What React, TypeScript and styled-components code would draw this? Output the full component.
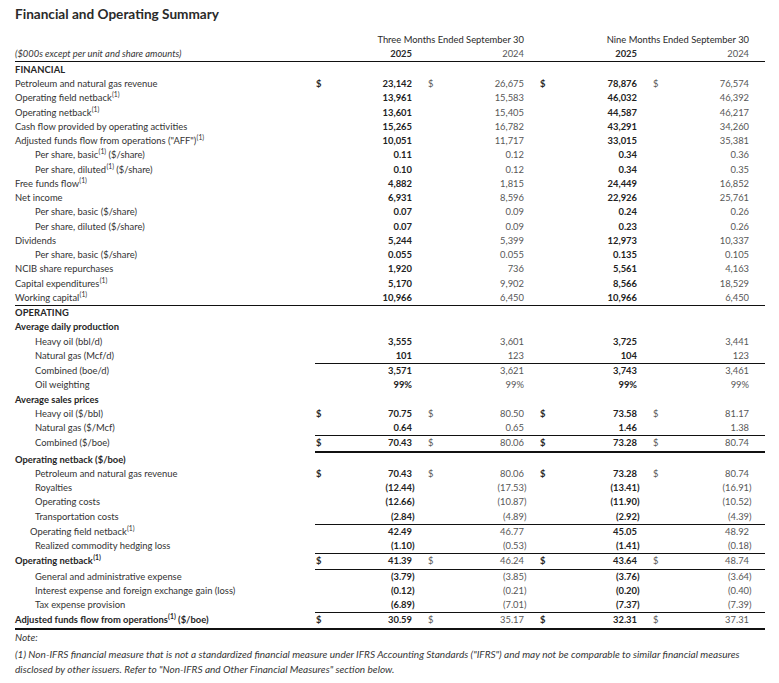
import React from "react";
import styled, { createGlobalStyle, css } from "styled-components";

const GlobalStyle = createGlobalStyle`
  html, body { margin: 0; padding: 0; background: #ffffff; }
  body { font-family: "Lato", "Liberation Sans", sans-serif; color: #333333; }
`;

const Page = styled.div`
  width: 750px;
  padding: 5px 14px 0 15px;
`;

const Title = styled.h1`
  margin: 0;
  font-size: 13.6px;
  line-height: 18px;
  font-weight: 700;
  color: #2a2a2a;
`;

const Table = styled.table`
  margin-top: 10px;
  width: 750px;
  table-layout: fixed;
  border-collapse: separate;
  border-spacing: 0;
  font-size: 9.4px;
`;

type Rule = "none" | "values" | "full" | "valuesThick" | "fullThick";

const ruleCss = (rule: Rule, isLabel: boolean) => {
  if (rule === "none") return "";
  if (isLabel && (rule === "values" || rule === "valuesThick")) return "";
  const w = rule === "valuesThick" || rule === "fullThick" ? 2 : 1;
  return css`border-bottom: ${w}px solid #111;`;
};

const cellBase = css<{ $tall?: boolean }>`
  vertical-align: top;
  line-height: ${(p) => (p.$tall ? "15px" : "14.25px")};
`;

const HeadCell = styled.th<{ $pr: number; $bold?: boolean; $muted?: boolean; $rule?: boolean }>`
  padding: 0 ${(p) => p.$pr}px 0 0;
  text-align: right;
  vertical-align: top;
  line-height: 14px;
  font-weight: ${(p) => (p.$bold ? 700 : 400)};
  color: ${(p) => (p.$muted ? "#575757" : "#2a2a2a")};
  white-space: nowrap;
  ${(p) => p.$rule && css`border-bottom: 1px solid #111;`}
`;

const UnitsCell = styled.th`
  padding: 0;
  text-align: left;
  vertical-align: top;
  line-height: 14px;
  font-weight: 400;
  font-style: italic;
  color: #363636;
  white-space: nowrap;
  border-bottom: 1px solid #111;
`;

const LabelCell = styled.td<{ $indent: number; $bold?: boolean; $caps?: boolean; $rule: Rule; $tall?: boolean }>`
  ${cellBase}
  padding: 0 0 0 ${(p) => p.$indent}px;
  text-align: left;
  white-space: nowrap;
  font-weight: ${(p) => (p.$bold ? 700 : 400)};
  color: ${(p) => (p.$bold ? "#262626" : "#333333")};
  ${(p) => p.$caps && css`text-transform: uppercase; letter-spacing: 0.1px;`}
  ${(p) => ruleCss(p.$rule, true)}
`;

const DollarCell = styled.td<{ $pl: number; $current?: boolean; $rule: Rule; $tall?: boolean }>`
  ${cellBase}
  padding: 0 0 0 ${(p) => p.$pl}px;
  text-align: left;
  font-weight: ${(p) => (p.$current ? 700 : 400)};
  color: ${(p) => (p.$current ? "#262626" : "#575757")};
  ${(p) => ruleCss(p.$rule, false)}
`;

const ValueCell = styled.td<{ $pr: number; $current?: boolean; $rule: Rule; $tall?: boolean }>`
  ${cellBase}
  padding: 0 ${(p) => p.$pr}px 0 0;
  text-align: right;
  white-space: nowrap;
  font-weight: ${(p) => (p.$current ? 700 : 400)};
  color: ${(p) => (p.$current ? "#222222" : "#575757")};
  ${(p) => ruleCss(p.$rule, false)}
`;

const Close = styled.span`
  display: inline-block;
  width: 0;
`;

const Sup = styled.sup`
  font-size: 6.8px;
  line-height: 0;
  vertical-align: 3.8px;
  margin-left: 0.3px;
`;

const Note = styled.p`
  margin: 0;
  font-size: 10px;
  line-height: 14px;
  font-style: italic;
  color: #363636;
`;

const Footnote = styled.p`
  margin: 3px 0 0;
  font-size: 10.05px;
  line-height: 15px;
  font-style: italic;
  color: #363636;
  white-space: nowrap;
`;

type Vals = [string, string, string, string];

type RowDef = {
  label: string;
  sup?: boolean;
  after?: string;
  indent?: number;
  bold?: boolean;
  caps?: boolean;
  vals?: Vals;
  dollar?: boolean;
  rule?: Rule;
  tall?: boolean;
};

const rows: RowDef[] = [
  { label: "Financial", caps: true, bold: true, tall: true },
  { label: "Petroleum and natural gas revenue", vals: ["23,142", "26,675", "78,876", "76,574"], dollar: true },
  { label: "Operating field netback", sup: true, vals: ["13,961", "15,583", "46,032", "46,392"] },
  { label: "Operating netback", sup: true, vals: ["13,601", "15,405", "44,587", "46,217"] },
  { label: "Cash flow provided by operating activities", vals: ["15,265", "16,782", "43,291", "34,260"] },
  { label: "Adjusted funds flow from operations (\"AFF\")", sup: true, vals: ["10,051", "11,717", "33,015", "35,381"] },
  { label: "Per share, basic", sup: true, after: " ($/share)", indent: 20, vals: ["0.11", "0.12", "0.34", "0.36"] },
  { label: "Per share, diluted", sup: true, after: " ($/share)", indent: 20, vals: ["0.10", "0.12", "0.34", "0.35"] },
  { label: "Free funds flow", sup: true, vals: ["4,882", "1,815", "24,449", "16,852"] },
  { label: "Net income", vals: ["6,931", "8,596", "22,926", "25,761"] },
  { label: "Per share, basic ($/share)", indent: 20, vals: ["0.07", "0.09", "0.24", "0.26"] },
  { label: "Per share, diluted ($/share)", indent: 20, vals: ["0.07", "0.09", "0.23", "0.26"] },
  { label: "Dividends", vals: ["5,244", "5,399", "12,973", "10,337"] },
  { label: "Per share, basic ($/share)", indent: 20, vals: ["0.055", "0.055", "0.135", "0.105"] },
  { label: "NCIB share repurchases", vals: ["1,920", "736", "5,561", "4,163"] },
  { label: "Capital expenditures", sup: true, vals: ["5,170", "9,902", "8,566", "18,529"] },
  { label: "Working capital", sup: true, vals: ["10,966", "6,450", "10,966", "6,450"], rule: "full" },
  { label: "Operating", caps: true, bold: true },
  { label: "Average daily production", bold: true },
  { label: "Heavy oil (bbl/d)", indent: 20, vals: ["3,555", "3,601", "3,725", "3,441"] },
  { label: "Natural gas (Mcf/d)", indent: 20, vals: ["101", "123", "104", "123"], rule: "values" },
  { label: "Combined (boe/d)", indent: 20, vals: ["3,571", "3,621", "3,743", "3,461"] },
  { label: "Oil weighting", indent: 20, vals: ["99%", "99%", "99%", "99%"] },
  { label: "Average sales prices", bold: true },
  { label: "Heavy oil ($/bbl)", indent: 20, vals: ["70.75", "80.50", "73.58", "81.17"], dollar: true },
  { label: "Natural gas ($/Mcf)", indent: 20, vals: ["0.64", "0.65", "1.46", "1.38"], rule: "values" },
  { label: "Combined ($/boe)", indent: 20, vals: ["70.43", "80.06", "73.28", "80.74"], dollar: true, rule: "valuesThick" },
  { label: "Operating netback ($/boe)", bold: true },
  { label: "Petroleum and natural gas revenue", indent: 20, vals: ["70.43", "80.06", "73.28", "80.74"], dollar: true },
  { label: "Royalties", indent: 20, vals: ["(12.44)", "(17.53)", "(13.41)", "(16.91)"] },
  { label: "Operating costs", indent: 20, vals: ["(12.66)", "(10.87)", "(11.90)", "(10.52)"] },
  { label: "Transportation costs", indent: 20, vals: ["(2.84)", "(4.89)", "(2.92)", "(4.39)"], rule: "values" },
  { label: "Operating field netback", sup: true, indent: 15, vals: ["42.49", "46.77", "45.05", "48.92"] },
  { label: "Realized commodity hedging loss", indent: 20, vals: ["(1.10)", "(0.53)", "(1.41)", "(0.18)"], rule: "values" },
  { label: "Operating netback", sup: true, bold: true, vals: ["41.39", "46.24", "43.64", "48.74"], dollar: true, rule: "values" },
  { label: "General and administrative expense", indent: 20, vals: ["(3.79)", "(3.85)", "(3.76)", "(3.64)"] },
  { label: "Interest expense and foreign exchange gain (loss)", indent: 20, vals: ["(0.12)", "(0.21)", "(0.20)", "(0.40)"] },
  { label: "Tax expense provision", indent: 20, vals: ["(6.89)", "(7.01)", "(7.37)", "(7.39)"], rule: "values" },
  { label: "Adjusted funds flow from operations", sup: true, after: " ($/boe)", bold: true, vals: ["30.59", "35.17", "32.31", "37.31"], dollar: true, rule: "fullThick" },
];

const valuePad = [3, 3, 3, 16];
const dollarPad = [1, 13, 13, 13];
const colWidths = [300, 15, 85, 25, 87, 25, 88, 25, 100];

const Col = styled.col<{ $w: number }>`
  width: ${(p) => p.$w}px;
`;

const Num: React.FC<{ v: string }> = ({ v }) =>
  v.endsWith(")") ? (
    <>
      {v.slice(0, -1)}
      <Close>)</Close>
    </>
  ) : (
    <>{v}</>
  );

const BodyRow: React.FC<{ r: RowDef }> = ({ r }) => {
  const rule = r.rule ?? "none";
  return (
    <tr>
      <LabelCell $indent={r.indent ?? 0} $bold={r.bold} $caps={r.caps} $rule={rule} $tall={r.tall}>
        {r.label}
        {r.sup && <Sup>(1)</Sup>}
        {r.after}
      </LabelCell>
      {[0, 1, 2, 3].map((i) => (
        <React.Fragment key={i}>
          <DollarCell $pl={dollarPad[i]} $current={i % 2 === 0} $rule={rule} $tall={r.tall}>
            {r.dollar ? "$" : ""}
          </DollarCell>
          <ValueCell $pr={valuePad[i]} $current={i % 2 === 0} $rule={rule} $tall={r.tall}>
            {r.vals ? <Num v={r.vals[i]} /> : ""}
          </ValueCell>
        </React.Fragment>
      ))}
    </tr>
  );
};

export default function App() {
  return (
    <>
      <GlobalStyle />
      <Page>
        <Title>Financial and Operating Summary</Title>
        <Table>
          <colgroup>
            {colWidths.map((w, i) => (
              <Col key={i} $w={w} />
            ))}
          </colgroup>
          <thead>
            <tr>
              <HeadCell $pr={0} />
              <HeadCell colSpan={4} $pr={3}>Three Months Ended September 30</HeadCell>
              <HeadCell colSpan={4} $pr={16}>Nine Months Ended September 30</HeadCell>
            </tr>
            <tr>
              <UnitsCell>($000s except per unit and share amounts)</UnitsCell>
              <HeadCell $pr={0} $rule />
              <HeadCell $pr={3} $bold $rule>2025</HeadCell>
              <HeadCell $pr={0} $rule />
              <HeadCell $pr={3} $muted $rule>2024</HeadCell>
              <HeadCell $pr={0} $rule />
              <HeadCell $pr={3} $bold $rule>2025</HeadCell>
              <HeadCell $pr={0} $rule />
              <HeadCell $pr={16} $muted $rule>2024</HeadCell>
            </tr>
          </thead>
          <tbody>
            {rows.map((r, i) => (
              <BodyRow key={i} r={r} />
            ))}
          </tbody>
        </Table>
        <Note>Note:</Note>
        <Footnote>
          (1) Non-IFRS financial measure that is not a standardized financial measure under IFRS Accounting Standards ("IFRS") and may not be comparable to similar financial measures
          <br />
          disclosed by other issuers. Refer to "Non-IFRS and Other Financial Measures" section below.
        </Footnote>
      </Page>
    </>
  );
}
